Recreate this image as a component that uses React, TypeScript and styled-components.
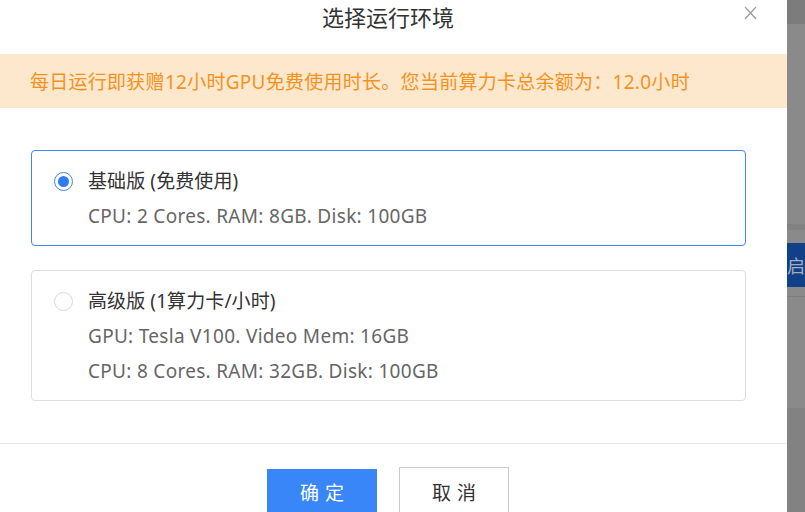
import styled, { createGlobalStyle } from 'styled-components';
import { FC } from 'react';

const GlobalStyle = createGlobalStyle`
  html, body {
    margin: 0;
    padding: 0;
    height: 512px;
    overflow: hidden;
    background: #ffffff;
  }
  body {
    font-family: 'Noto Sans', 'Noto Sans CJK SC', sans-serif;
    color: #333333;
  }
  * {
    box-sizing: border-box;
  }
`;

const StyledScreen = styled.div`
  display: flex;
  width: 805px;
  height: 512px;
  overflow: hidden;
`;

const StyledModal = styled.div`
  display: flex;
  flex-direction: column;
  width: 787px;
  height: 512px;
  background: #ffffff;

  & > * {
    flex: none;
  }
`;

const StyledHeader = styled.div`
  display: grid;
  grid-template-columns: 1fr auto 1fr;
  height: 54px;
  padding-right: 11px;
`;

const StyledTitle = styled.h2`
  grid-column: 2;
  margin: 0;
  height: 34px;
  line-height: 34px;
  font-size: 22px;
  font-weight: 400;
  color: #333333;
`;

const StyledClose = styled.button`
  grid-column: 3;
  justify-self: end;
  align-self: start;
  margin: 6px 19px 0 0;
  padding: 0;
  width: 13px;
  height: 14px;
  border: none;
  background: transparent;
  cursor: pointer;
  display: flex;
`;

const StyledBanner = styled.div`
  height: 54px;
  display: flex;
  align-items: center;
  padding-left: 30px;
  background: #fde8cd;
  color: #f5921e;
  font-size: 19px;
  letter-spacing: 0.27px;
  white-space: nowrap;
`;

const StyledBody = styled.div`
  display: flex;
  flex-direction: column;
  gap: 24px;
  padding: 42px 41px 42px 31px;
  border-bottom: 1px solid #e8e8e8;
`;

const StyledCard = styled.label<{ $active?: boolean }>`
  display: flex;
  gap: 15px;
  padding: 13px 22px 11px;
  border: 1px solid ${({ $active }) => ($active ? '#3f87f5' : '#dedede')};
  border-radius: 4px;
  cursor: pointer;
`;

const StyledRadio = styled.span<{ $checked?: boolean }>`
  flex: none;
  margin-top: 8px;
  width: 19px;
  height: 19px;
  border-radius: 50%;
  border: 1px solid ${({ $checked }) => ($checked ? '#3f87f5' : '#d9d9d9')};
  display: flex;
  align-items: center;
  justify-content: center;

  &::after {
    content: '';
    width: 11px;
    height: 11px;
    border-radius: 50%;
    background: ${({ $checked }) => ($checked ? '#2f7cf0' : 'transparent')};
  }
`;

const StyledInfo = styled.div`
  display: flex;
  flex-direction: column;
`;

const StyledPlanName = styled.div`
  line-height: 35px;
  font-size: 19px;
  letter-spacing: 0.1px;
  color: #333333;
`;

const StyledSpec = styled.div`
  line-height: 35px;
  font-size: 19px;
  letter-spacing: 0.3px;
  color: #666666;
`;

const StyledFooter = styled.div`
  display: flex;
  justify-content: center;
  align-items: center;
  gap: 22px;
  padding: 23px 11px 0 0;
`;

const StyledButton = styled.button<{ $primary?: boolean }>`
  width: 110px;
  height: ${({ $primary }) => ($primary ? '44px' : '48px')};
  flex: none;
  border: ${({ $primary }) => ($primary ? 'none' : '1px solid #cccccc')};
  background: ${({ $primary }) => ($primary ? '#3886f8' : '#ffffff')};
  color: ${({ $primary }) => ($primary ? '#ffffff' : '#333333')};
  font-family: 'Noto Sans CJK SC', sans-serif;
  font-size: 19px;
  letter-spacing: 6px;
  text-indent: 6px;
  cursor: pointer;
`;

const StyledBackdrop = styled.div`
  flex: 1;
  display: flex;
  flex-direction: column;
  background: #8a8a8a;
  overflow: hidden;
`;

const StyledBackdropBand = styled.div<{ $height: number; $color: string }>`
  flex: none;
  height: ${({ $height }) => $height}px;
  background: ${({ $color }) => $color};
`;

const StyledBackdropAction = styled.div`
  flex: none;
  height: 44px;
  background: #0f4088;
  color: #a6adbb;
  font-family: 'Noto Sans CJK SC', sans-serif;
  font-size: 18px;
  line-height: 44px;
  white-space: nowrap;
`;

const StyledBackdropRest = styled.div`
  flex: 1;
  background: #828282;
`;

type Plan = {
  name: string;
  specs: string[];
  active?: boolean;
};

const plans: Plan[] = [
  {
    name: '基础版 (免费使用)',
    specs: ['CPU: 2 Cores. RAM: 8GB. Disk: 100GB'],
    active: true,
  },
  {
    name: '高级版 (1算力卡/小时)',
    specs: ['GPU: Tesla V100. Video Mem: 16GB', 'CPU: 8 Cores. RAM: 32GB. Disk: 100GB'],
  },
];

const PlanCard: FC<{ plan: Plan }> = ({ plan }) => (
  <StyledCard $active={plan.active}>
    <StyledRadio $checked={plan.active} />
    <StyledInfo>
      <StyledPlanName>{plan.name}</StyledPlanName>
      {plan.specs.map((spec) => (
        <StyledSpec key={spec}>{spec}</StyledSpec>
      ))}
    </StyledInfo>
  </StyledCard>
);

export default function App() {
  return (
    <>
      <GlobalStyle />
      <StyledScreen>
        <StyledModal>
          <StyledHeader>
            <StyledTitle>选择运行环境</StyledTitle>
            <StyledClose aria-label="关闭">
              <svg width="13" height="14" viewBox="0 0 13 14">
                <path d="M1 1 L12 13 M12 1 L1 13" stroke="#9a9a9a" strokeWidth="1.2" fill="none" />
              </svg>
            </StyledClose>
          </StyledHeader>
          <StyledBanner>每日运行即获赠12小时GPU免费使用时长。您当前算力卡总余额为：12.0小时</StyledBanner>
          <StyledBody>
            {plans.map((plan) => (
              <PlanCard key={plan.name} plan={plan} />
            ))}
          </StyledBody>
          <StyledFooter>
            <StyledButton $primary>确定</StyledButton>
            <StyledButton>取消</StyledButton>
          </StyledFooter>
        </StyledModal>
        <StyledBackdrop>
          <StyledBackdropBand $height={24} $color="#7c7c7c" />
          <StyledBackdropBand $height={200} $color="#8a8a8a" />
          <StyledBackdropBand $height={6} $color="#828282" />
          <StyledBackdropBand $height={13} $color="#8a8a8a" />
          <StyledBackdropAction>启动</StyledBackdropAction>
          <StyledBackdropBand $height={9} $color="#8a8a8a" />
          <StyledBackdropBand $height={1} $color="#7e7e7e" />
          <StyledBackdropBand $height={111} $color="#8a8a8a" />
          <StyledBackdropRest />
        </StyledBackdrop>
      </StyledScreen>
    </>
  );
}
